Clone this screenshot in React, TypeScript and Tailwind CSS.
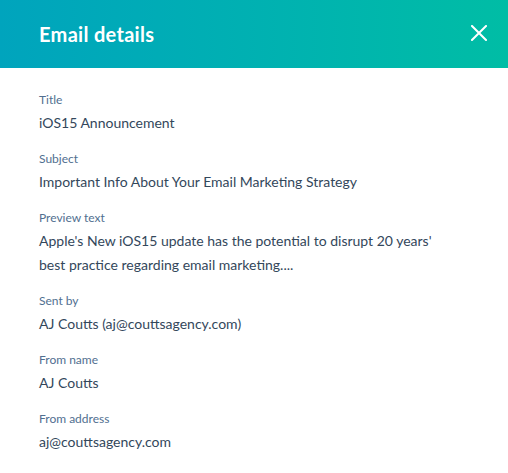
const fields: { label: string; value: string }[] = [
  { label: 'Title', value: 'iOS15 Announcement' },
  { label: 'Subject', value: 'Important Info About Your Email Marketing Strategy' },
  {
    label: 'Preview text',
    value:
      "Apple's New iOS15 update has the potential to disrupt 20 years' best practice regarding email marketing....",
  },
  { label: 'Sent by', value: 'AJ Coutts (aj@couttsagency.com)' },
  { label: 'From name', value: 'AJ Coutts' },
  { label: 'From address', value: 'aj@couttsagency.com' },
];

export default function App() {
  return (
    <div className="w-[508px] h-[473px] bg-white font-['Lato',sans-serif] overflow-hidden">
      {/* Header */}
      <div className="h-[68px] flex items-center justify-between pl-[39px] pr-[21px] bg-gradient-to-r from-[#00a4bd] to-[#00bda5]">
        <h1 className="text-[20px] font-bold tracking-[0.3px] text-white -mt-[1px]">Email details</h1>
        <button className="w-[16px] h-[16px] text-white -mt-[3px]">
          <svg viewBox="0 0 16 16" width="16" height="16" fill="none" stroke="currentColor" strokeWidth="2" strokeLinecap="square">
            <path d="M1 1L15 15M15 1L1 15" />
          </svg>
        </button>
      </div>

      {/* Fields */}
      <div className="pl-[39px] pr-[52px] pt-[21px] flex flex-col gap-[13px]">
        {fields.map((f) => (
          <div key={f.label}>
            <div className="text-[12px] leading-[22px] text-[#516f90]">{f.label}</div>
            <div className="text-[14px] leading-[24px] text-[#33475b]">{f.value}</div>
          </div>
        ))}
      </div>
    </div>
  );
}
